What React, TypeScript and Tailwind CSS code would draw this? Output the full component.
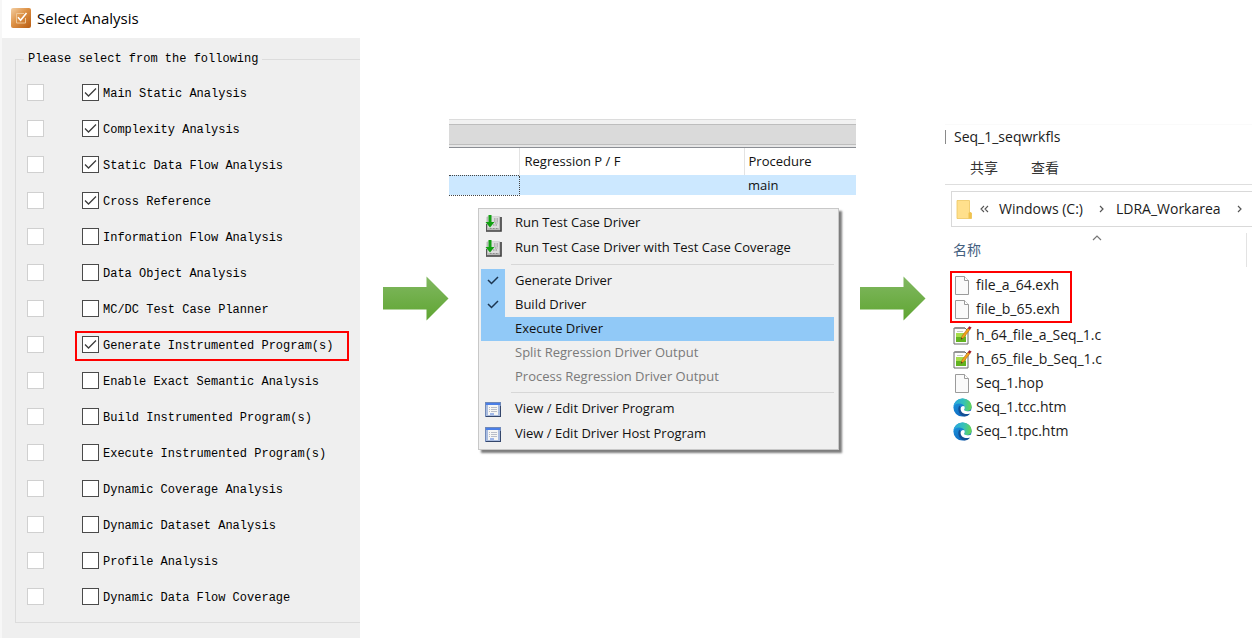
import { useState } from "react";
import clsx from "clsx";

const ANALYSES = [
  { label: "Main Static Analysis", checked: true },
  { label: "Complexity Analysis", checked: true },
  { label: "Static Data Flow Analysis", checked: true },
  { label: "Cross Reference", checked: true },
  { label: "Information Flow Analysis", checked: false },
  { label: "Data Object Analysis", checked: false },
  { label: "MC/DC Test Case Planner", checked: false },
  { label: "Generate Instrumented Program(s)", checked: true, marked: true },
  { label: "Enable Exact Semantic Analysis", checked: false },
  { label: "Build Instrumented Program(s)", checked: false },
  { label: "Execute Instrumented Program(s)", checked: false },
  { label: "Dynamic Coverage Analysis", checked: false },
  { label: "Dynamic Dataset Analysis", checked: false },
  { label: "Profile Analysis", checked: false },
  { label: "Dynamic Data Flow Coverage", checked: false },
];

type FileKind = "blank" | "source" | "edge";

const MARKED_FILES: { name: string; kind: FileKind }[] = [
  { name: "file_a_64.exh", kind: "blank" },
  { name: "file_b_65.exh", kind: "blank" },
];

const OTHER_FILES: { name: string; kind: FileKind }[] = [
  { name: "h_64_file_a_Seq_1.c", kind: "source" },
  { name: "h_65_file_b_Seq_1.c", kind: "source" },
  { name: "Seq_1.hop", kind: "blank" },
  { name: "Seq_1.tcc.htm", kind: "edge" },
  { name: "Seq_1.tpc.htm", kind: "edge" },
];

/* ---------- icons ---------- */

function AppIcon() {
  return (
    <svg width="20" height="20" viewBox="0 0 20 20" aria-hidden="true">
      <defs>
        <linearGradient id="app" x1="0" y1="0" x2="1" y2="1">
          <stop offset="0" stopColor="#f3cfa4" />
          <stop offset="0.45" stopColor="#dd9145" />
          <stop offset="1" stopColor="#b85c12" />
        </linearGradient>
      </defs>
      <rect width="20" height="20" rx="2" fill="url(#app)" />
      <path d="M13 5.500H5.500v9.500h9v-5" fill="none" stroke="#efc797" strokeWidth="1" />
      <path d="M7 9.200l2.600 3L15.500 5" fill="none" stroke="#fff" strokeWidth="1.600" />
    </svg>
  );
}

function RunIcon() {
  return (
    <svg width="17" height="17" viewBox="0 0 17 17" aria-hidden="true">
      <rect x="1.500" y="1.500" width="14" height="14" rx="1" fill="#b9b9b9" />
      <path d="M3 2h11v11H3z" fill="#dcdcdc" />
      <path d="M1 16h15V2" fill="none" stroke="#3c3c3c" strokeWidth="1.600" />
      <path d="M1.500 9v7" stroke="#555" />
      <path d="M9 4h4M9 6h4M10 8h3M8 10h5M5 13.500h2M8 13.500h2M11 13.500h2" stroke="#8d8d8d" strokeDasharray="1.500 1" />
      <path d="M3.500 0h3v7h3L5 12.500.5 7h3z" fill="#12a012" />
    </svg>
  );
}

function ViewIcon() {
  return (
    <svg width="16" height="15" viewBox="0 0 16 15" aria-hidden="true">
      <rect x="0.5" y="0.5" width="15" height="14" fill="#a9bce0" stroke="#7089b8" />
      <rect x="1" y="1" width="14" height="2" fill="#4a7ee6" />
      <rect x="3" y="3" width="10" height="10" fill="#f6f6f4" />
      <path d="M4 5.500h1M6 5.500h6M4 7.500h1M6 7.500h6M4 9.500h1M6 9.500h6" stroke="#b9bdc8" />
      <path d="M5 12h4" stroke="#4a7be0" />
      <path d="M1 14.500h15M15.500 4v10" stroke="#34466b" />
    </svg>
  );
}

function FolderIcon() {
  return (
    <svg width="16" height="19" viewBox="0 0 16 19" aria-hidden="true">
      <path d="M1 .5h12.500V12l2 1v5.500H1z" fill="#ffe08c" stroke="#eec761" strokeWidth="0.8" />
      <path d="M13.500 12l2 1v5.500h-3V13z" fill="#f0c24e" />
    </svg>
  );
}

function FileIcon({ kind }: { kind: FileKind }) {
  if (kind === "source") {
    return (
      <svg width="19" height="19" viewBox="0 0 19 19" aria-hidden="true">
        <path d="M1 2h11l3 3v13H1z" fill="#fdfdfd" stroke="#6b6b6b" />
        <path d="M3 1v2M5 1v2M7 1v2M9 1v2M11 1v2" stroke="#777" />
        <path d="M4 5.500h6" stroke="#c4cbc4" />
        <path d="M3 7h10v9H3z" fill="#a6dd4a" />
        <path d="M3 11h10v5H3z" fill="#62b321" />
        <path d="M8 13.500l1-3.500 6-8 2 1.500-6.500 8.500z" fill="#f4a11d" stroke="#9a6210" strokeWidth="0.5" />
        <path d="M14.800 2.200l1.400-2L18.600 1.500l-1.600 2.200z" fill="#a3202c" />
        <path d="M8 13.500l.6-1.800 1 .8z" fill="#222" />
      </svg>
    );
  }
  if (kind === "edge") {
    return (
      <svg width="19" height="19" viewBox="0 0 24 24" aria-hidden="true">
        <defs>
          <linearGradient id="edgeTop" x1="0" y1="0.4" x2="1" y2="0.5">
            <stop offset="0" stopColor="#2aa6e0" />
            <stop offset="0.55" stopColor="#35c1b8" />
            <stop offset="1" stopColor="#66d650" />
          </linearGradient>
          <linearGradient id="edgeSide" x1="0" y1="0" x2="0.6" y2="1">
            <stop offset="0" stopColor="#1e9be0" />
            <stop offset="1" stopColor="#0f67bf" />
          </linearGradient>
        </defs>
        <circle cx="12" cy="12" r="11.500" fill="url(#edgeSide)" />
        <path d="M8 9.500c-3 4.500-.5 12.500 6 13.800 3 .2 6-1.300 7.600-3.800-4.500 1.500-10-.5-11-5.500z" fill="#124f96" />
        <path d="M.6 11C1.500 4.500 6.500.5 12.200.5 18.800.5 23.500 5.200 23.500 10.600c0 3.600-2.700 5.900-6 5.900-2.700 0-4-1-3.400-2 .8-1 .9-1.900.7-2.900C14.200 8.700 11 7 7.600 7 4.500 7 2 8.600.6 11z" fill="url(#edgeTop)" />
        <path d="M14.600 10.800c-1.800-1.600-4.800-.4-5 2.700-.2 4 3.600 6.800 7.800 6.800 2.300 0 4-.7 5-1.700.9-1 1.500-2.200 1.700-3.600-1.600 1.300-3.700 1.800-6 1.700-3-.1-4.600-1-4-2.200.8-1 .9-1.900.5-3.700z" fill="#fff" />
      </svg>
    );
  }
  return (
    <svg width="19" height="19" viewBox="0 0 19 19" aria-hidden="true">
      <path d="M2.500.5h9l4 4v14h-13z" fill="#fafafa" stroke="#9b9b9b" />
      <path d="M11.500.5v4h4" fill="#fff" stroke="#9b9b9b" />
    </svg>
  );
}

function Arrow() {
  return (
    <svg width="66" height="45" viewBox="0 0 66 45" className="shrink-0" aria-hidden="true">
      <defs>
        <linearGradient id="arrow" x1="0" y1="0" x2="0" y2="1">
          <stop offset="0" stopColor="#81b861" />
          <stop offset="1" stopColor="#5fa532" />
        </linearGradient>
      </defs>
      <path d="M0 11h43.500V.5L65.500 22.500l-22 22V33.500H0z" fill="url(#arrow)" />
    </svg>
  );
}

/* ---------- select analysis ---------- */

function AnalysisRow({ label, checked, marked }: { label: string; checked: boolean; marked?: boolean }) {
  const [on, setOn] = useState(checked);

  return (
    <li className="flex h-9 items-center pl-[11px]">
      <input
        type="checkbox"
        disabled
        aria-label={label}
        className="mr-[38px] size-[17px] shrink-0 appearance-none border border-[#d0d0d0] bg-white"
      />
      <label className="relative flex items-center gap-1 whitespace-nowrap">
        <input
          type="checkbox"
          checked={on}
          onChange={(e) => setOn(e.target.checked)}
          className="size-[17px] shrink-0 appearance-none border border-[#4a4a4a] bg-white"
        />
        {on && (
          <svg width="17" height="17" viewBox="0 0 17 17" className="absolute left-0" aria-hidden="true">
            <path d="M3 8.500l3.500 3.500L14 4.500" fill="none" stroke="#3c3c3c" strokeWidth="1.300" />
          </svg>
        )}
        <span className="pt-1">{label}</span>
        {marked && <span className="absolute -top-[3px] -right-4 -bottom-[7px] -left-[7px] border-2 border-[#f00]" />}
      </label>
    </li>
  );
}

function SelectAnalysis() {
  return (
    <section className="border-l-2 border-[#f7f7f7]">
      <header className="flex h-[38px] items-center gap-[6px] pb-[2px] pl-[9px] font-['Open_Sans','Noto_Sans',sans-serif] text-[15px] text-black">
        <AppIcon />
        <h1>Select Analysis</h1>
      </header>
      <div className="bg-[#efefef] pt-[11px] pb-[15px] pl-[13px] font-['Liberation_Mono',monospace] text-xs text-black">
        <fieldset className="border border-r-0 border-[#dcdcdc] pb-2">
          <legend className="ml-2 px-1 leading-5">Please select from the following</legend>
          <ul className="pt-[5px]">
            {ANALYSES.map((a) => (
              <AnalysisRow key={a.label} {...a} />
            ))}
          </ul>
        </fieldset>
      </div>
    </section>
  );
}

/* ---------- regression table + context menu ---------- */

interface MenuItemProps {
  label: string;
  icon?: "run" | "view";
  checked?: boolean;
  active?: boolean;
  disabled?: boolean;
}

function MenuItem({ label, icon, checked, active, disabled }: MenuItemProps) {
  return (
    <button
      type="button"
      role="menuitem"
      disabled={disabled}
      className={clsx(
        "flex w-full items-center text-left whitespace-nowrap",
        icon ? "h-[25px]" : "h-6",
        active && "bg-[#91c9f7]",
        disabled ? "text-[#7a7a7a]" : "text-[#111]"
      )}
    >
      <span className={clsx("flex h-full w-6 shrink-0 items-center justify-center", checked && "bg-[#91c9f7]")}>
        {icon === "run" && <RunIcon />}
        {icon === "view" && <ViewIcon />}
        {checked && (
          <svg width="12" height="9" viewBox="0 0 12 9" aria-hidden="true">
            <path d="M1 4l3.500 3.500L11 1" fill="none" stroke="#1c3550" strokeWidth="1.500" />
          </svg>
        )}
      </span>
      <span className="ml-[10px]">{label}</span>
    </button>
  );
}

function MenuDivider() {
  return (
    <div role="separator" className="flex h-2 items-center pl-[30px]">
      <span className="h-px w-full bg-[#d7d7d7]" />
    </div>
  );
}

function RegressionPanel() {
  return (
    <section className="pt-[119px] font-['Open_Sans','Noto_Sans',sans-serif] text-[13px] text-[#111]">
      <div className="h-[5px] border-t border-[#dcdcdc] bg-[#f1f1f1]" />
      <div className="h-[21px] border-y border-[#bdbdbd] bg-[#dadada]" />
      <div className="h-[3px] border-b border-[#8a8d93] bg-[#e6e6e6]" />
      <table className="w-full table-fixed border-collapse text-left">
        <colgroup>
          <col className="w-[70px]" />
          <col />
          <col className="w-[112px]" />
        </colgroup>
        <thead>
          <tr className="h-[27px]">
            <td className="border-r border-[#e3e3e3]" />
            <th className="border-r border-[#e3e3e3] pl-[5px] font-normal">Regression P / F</th>
            <th className="pl-1 font-normal">Procedure</th>
          </tr>
        </thead>
        <tbody>
          <tr className="h-5 bg-[#cce8ff] leading-5">
            <td className="border border-l-0 border-dotted border-[#444]" />
            <td />
            <td className="pl-1">main</td>
          </tr>
        </tbody>
      </table>
      <div
        role="menu"
        className="mt-3 mr-[17px] ml-[29px] border border-[#c8c8c8] bg-[#f0f0f0] py-[2px] pr-1 pl-[2px] shadow-[3px_3px_2px_#7d7d7d]"
      >
        <MenuItem icon="run" label="Run Test Case Driver" />
        <MenuItem icon="run" label="Run Test Case Driver with Test Case Coverage" />
        <MenuDivider />
        <MenuItem checked label="Generate Driver" />
        <MenuItem checked label="Build Driver" />
        <MenuItem checked={false} active label="Execute Driver" />
        <MenuItem disabled label="Split Regression Driver Output" />
        <MenuItem disabled label="Process Regression Driver Output" />
        <MenuDivider />
        <MenuItem icon="view" label="View / Edit Driver Program" />
        <MenuItem icon="view" label="View / Edit Driver Host Program" />
      </div>
    </section>
  );
}

/* ---------- file explorer ---------- */

function FileRow({ name, kind }: { name: string; kind: FileKind }) {
  return (
    <li>
      <button type="button" className="flex h-6 items-center gap-1 whitespace-nowrap">
        <FileIcon kind={kind} />
        {name}
      </button>
    </li>
  );
}

function Crumb() {
  return (
    <svg width="5" height="8" viewBox="0 0 5 8" className="shrink-0" aria-hidden="true">
      <path d="M1 1l3 3-3 3" fill="none" stroke="#555" strokeWidth="1.200" />
    </svg>
  );
}

function Explorer() {
  return (
    <section className="min-w-0 overflow-hidden pt-[124px] font-['Open_Sans','Noto_Sans','Noto_Sans_CJK_SC',sans-serif] text-sm text-[#1b1b1b]">
      <h2 className="flex h-6 items-center gap-2 border-t border-[#fafafa] text-sm">
        <span className="h-[14px] w-px bg-[#8a8a8a]" />
        Seq_1_seqwrkfls
      </h2>
      <nav className="flex h-[37px] items-center gap-[33px] border-b border-[#dedede] pt-1 pl-[25px] text-[#333]">
        <button type="button">共享</button>
        <button type="button">查看</button>
      </nav>
      <div className="mt-[6px] ml-[6px] flex h-9 items-center border border-r-0 border-[#d9d9d9] pl-1 whitespace-nowrap">
        <FolderIcon />
        <svg width="9" height="8" viewBox="0 0 9 8" className="ml-2 shrink-0" aria-hidden="true">
          <path d="M4 1L1 4l3 3M8 1L5 4l3 3" fill="none" stroke="#555" strokeWidth="1.100" />
        </svg>
        <a href="#c" className="mr-4 ml-[10px]">Windows (C:)</a>
        <Crumb />
        <a href="#workarea" className="mr-4 ml-3">LDRA_Workarea</a>
        <Crumb />
      </div>
      <div className="mt-[6px] mr-[5px] flex h-[34px] items-center border-r border-[#e3e3e3] pl-2">
        <button type="button" className="text-[#44607f]">名称</button>
        <svg width="10" height="6" viewBox="0 0 10 6" className="mb-6 ml-[111px]" aria-hidden="true">
          <path d="M1 5l4-4 4 4" fill="none" stroke="#777" strokeWidth="1.200" />
        </svg>
      </div>
      <ul className="mt-1 ml-[5px] w-[122px] border-2 border-[#f00] pl-px">
        {MARKED_FILES.map((f) => (
          <FileRow key={f.name} {...f} />
        ))}
      </ul>
      <ul className="ml-2">
        {OTHER_FILES.map((f) => (
          <FileRow key={f.name} {...f} />
        ))}
      </ul>
    </section>
  );
}

export default function App() {
  return (
    <main className="grid min-h-screen grid-cols-[360fr_89fr_407fr_89fr_307fr] items-start bg-white">
      <SelectAnalysis />
      <div className="flex justify-end pt-[276px]">
        <Arrow />
      </div>
      <RegressionPanel />
      <div className="flex pt-[276px] pl-1">
        <Arrow />
      </div>
      <Explorer />
    </main>
  );
}
